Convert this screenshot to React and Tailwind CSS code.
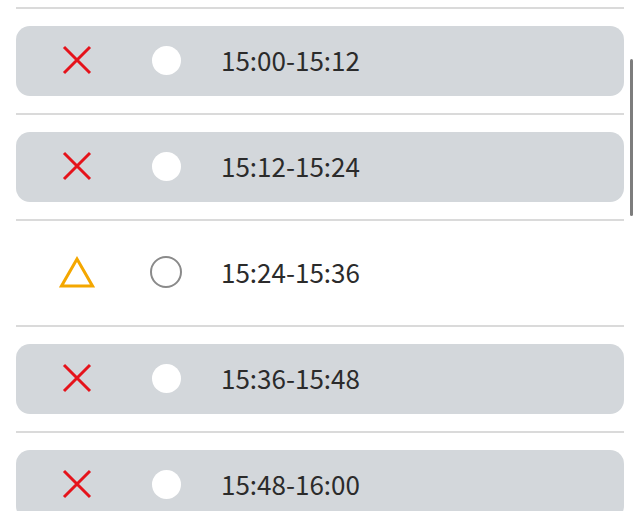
import React from 'react';

const slots = [
  { time: '15:00-15:12', status: 'full' },
  { time: '15:12-15:24', status: 'full' },
  { time: '15:24-15:36', status: 'few' },
  { time: '15:36-15:48', status: 'full' },
  { time: '15:48-16:00', status: 'full' },
];

const CrossIcon = () => (
  <svg width="30" height="30" viewBox="0 0 30 30">
    <path d="M2 2 L28 28 M28 2 L2 28" stroke="#e5131b" strokeWidth="3" fill="none" />
  </svg>
);

const TriangleIcon = () => (
  <svg width="36" height="32" viewBox="0 0 36 32">
    <path d="M18 3 L33.5 30 L2.5 30 Z" stroke="#f4a700" strokeWidth="3" fill="none" strokeLinejoin="miter" />
  </svg>
);

const Radio = ({ disabled }) =>
  disabled ? (
    <div className="w-[29px] h-[29px] rounded-full bg-white" />
  ) : (
    <div className="w-[32px] h-[32px] rounded-full border-[2.5px] border-[#8a8a8a] bg-white" />
  );

const Slot = ({ time, status }) => {
  const full = status === 'full';
  return (
    <div>
      <div className="h-[2px] bg-[#dadada]" />
      <div className="py-[17px]">
        <div
          className={`h-[70px] rounded-[14px] flex items-center ${full ? 'bg-[#d3d7db]' : 'bg-white'}`}
        >
          <div className="w-[120px] flex justify-center pl-[2px] pb-[2px]">
            {full ? <CrossIcon /> : <TriangleIcon />}
          </div>
          <div className="w-[60px] flex justify-center pb-[2px]">
            <Radio disabled={full} />
          </div>
          <div className="pl-[25px] text-[26px] text-[#2b2b2b] leading-none pb-[2px]">{time}</div>
        </div>
      </div>
    </div>
  );
};

export default function App() {
  return (
    <div
      className="relative w-[640px] h-[511px] overflow-hidden bg-white"
      style={{ fontFamily: '"Noto Sans CJK JP", "Noto Sans", sans-serif' }}
    >
      <div className="px-4 pt-[7px]">
        {slots.map((s) => (
          <Slot key={s.time} {...s} />
        ))}
      </div>
      <div className="absolute right-[7px] top-[59px] w-[3px] h-[157px] rounded-full bg-[#7d7d7d]" />
    </div>
  );
}
